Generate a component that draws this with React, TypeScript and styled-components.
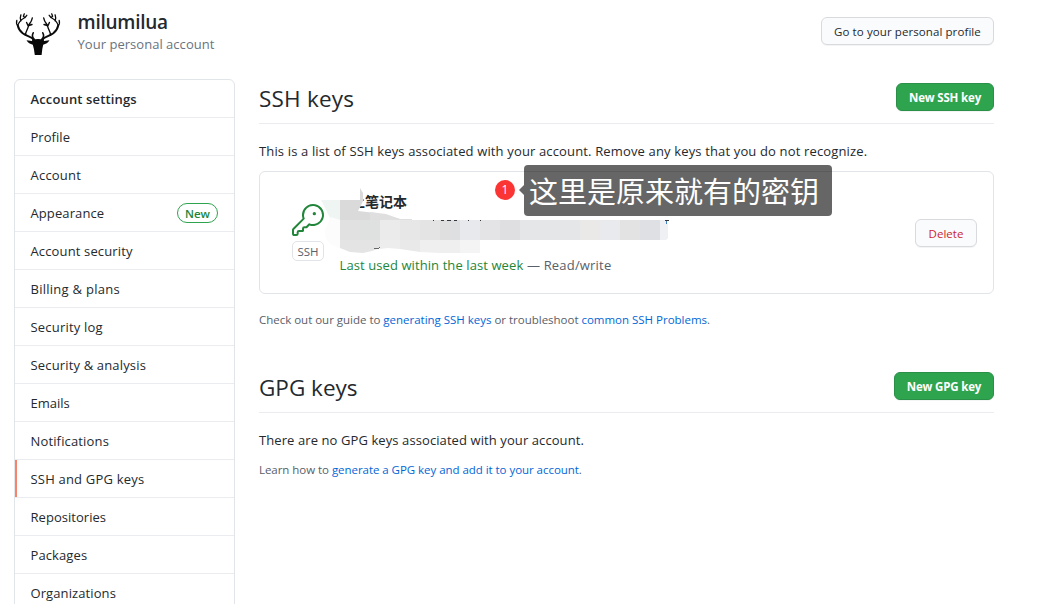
import React from "react";
import styled, { createGlobalStyle } from "styled-components";

const GlobalStyle = createGlobalStyle`
  * { box-sizing: border-box; }
  body {
    margin: 0;
    height: 604px;
    overflow: hidden;
    background: #fff;
    color: #24292e;
    font-family: "Open Sans", "Noto Sans CJK SC", sans-serif;
    font-size: 13px;
    line-height: 21px;
  }
  h1, h2, p { margin: 0; }
`;

const Page = styled.div`
  width: 994px;
  padding-left: 14px;
`;

const Header = styled.header`
  display: flex;
  align-items: flex-start;
  height: 79px;
  padding-top: 8px;
`;

const Identity = styled.div`
  flex: 1;
  padding: 2px 0 0 15.5px;
`;

const UserName = styled.h1`
  font-size: 19px;
  font-weight: 600;
  line-height: 25px;
`;

const Spaced = styled.span<{ $ls: number }>`
  letter-spacing: ${(p) => p.$ls}px;
`;

const UserNote = styled.p`
  color: #6a737d;
  line-height: 18px;
`;

const Button = styled.button<{ $width: number; $kind?: "primary" | "danger" }>`
  width: ${(p) => p.$width}px;
  height: 28px;
  flex: none;
  padding: 1px 0 0;
  border: 1px solid ${(p) => (p.$kind === "primary" ? "#2a8f47" : "#d8dade")};
  border-radius: 6px;
  background: ${(p) => (p.$kind === "primary" ? "#2ea44f" : "#fafbfc")};
  color: ${(p) => (p.$kind === "primary" ? "#fff" : p.$kind === "danger" ? "#cb2431" : "#24292e")};
  box-shadow: 0 1px 0 rgba(27, 31, 35, 0.05);
  font-family: inherit;
  font-size: 11.5px;
  font-weight: ${(p) => (p.$kind === "primary" ? 700 : 500)};
  line-height: 20px;
  white-space: nowrap;
`;

const ProfileAction = styled.div`
  padding-top: 9px;
`;

const Columns = styled.div`
  display: flex;
  gap: 24px;
`;

const Menu = styled.nav`
  width: 221px;
  flex: none;
  border: 1px solid #e1e4e8;
  border-radius: 6px;
`;

const MenuItem = styled.div<{ $heading?: boolean; $current?: boolean }>`
  display: flex;
  align-items: center;
  justify-content: space-between;
  height: 38px;
  padding: 1px 16px 0 15.5px;
  border-bottom: 1px solid #eaecef;
  font-weight: ${(p) => (p.$heading ? 600 : 400)};
  box-shadow: ${(p) => (p.$current ? "inset 2px 0 0 #f9826c" : "none")};
`;

const MenuText = styled(Spaced)`
  padding-top: 1px;
`;

const NewLabel = styled.span`
  width: 41px;
  height: 20px;
  margin-top: -1px;
  border: 1px solid #2ea44f;
  border-radius: 10px;
  color: #22863a;
  font-size: 11.5px;
  font-weight: 600;
  line-height: 19px;
  text-align: center;
`;

const Main = styled.main`
  width: 735px;
`;

const SectionHead = styled.div`
  display: flex;
  justify-content: space-between;
  height: 45px;
  padding-top: 4px;
  border-bottom: 1px solid #eaecef;
`;

const SectionTitle = styled.h2`
  font-size: 22.5px;
  font-weight: 400;
  line-height: 31px;
`;

const Paragraph = styled.p`
  padding-top: 17px;
  white-space: nowrap;
`;

const SmallNote = styled.p<{ $top: number }>`
  padding-top: ${(p) => p.$top}px;
  color: #586069;
  font-size: 11.5px;
  line-height: 18px;
  white-space: nowrap;
`;

const Link = styled.a`
  color: #0366d6;
`;

const KeyCard = styled.section`
  position: relative;
  display: flex;
  height: 123px;
  margin-top: 9px;
  padding: 20px 16px 0 32px;
  border: 1px solid #e1e4e8;
  border-radius: 6px;
`;

const KeyKind = styled.div`
  display: flex;
  flex-direction: column;
  align-items: center;
  width: 32px;
  padding-top: 12px;
`;

const KindLabel = styled.span`
  width: 32px;
  height: 20px;
  margin-top: 5px;
  border: 1px solid #e1e4e8;
  border-radius: 5px;
  color: #586069;
  font-size: 11.5px;
  line-height: 19px;
  text-align: center;
`;

const KeyInfo = styled.div`
  flex: 1;
  display: flex;
  flex-direction: column;
  justify-content: space-between;
  height: 84px;
  padding-left: 13px;
`;

const KeyName = styled.strong`
  font-size: 14px;
  font-weight: 700;
  line-height: 20px;
`;

const KeyUsage = styled.p`
  padding-left: 2.5px;
  color: #586069;
  white-space: nowrap;
`;

const Recent = styled.span`
  color: #22863a;
  letter-spacing: 0.09px;
`;

const DeleteSlot = styled.div`
  padding-top: 27px;
`;

const Redaction = styled.svg`
  position: absolute;
  left: 60px;
  top: 14px;
`;

const Callout = styled.div`
  position: absolute;
  left: 235px;
  top: -7px;
  display: flex;
  align-items: center;
`;

const CalloutNumber = styled.span`
  width: 20px;
  height: 20px;
  margin-bottom: 1px;
  border-radius: 50%;
  background: #fb3434;
  color: #fff;
  font-size: 12px;
  line-height: 20px;
  text-align: center;
`;

const CalloutArrow = styled.span`
  margin: 0 0 1px 4px;
  border: 5px solid transparent;
  border-left: 0;
  border-right-color: rgba(0, 0, 0, 0.6);
`;

const CalloutText = styled.span`
  width: 308px;
  height: 51px;
  padding-left: 5px;
  border-radius: 4px;
  background: rgba(0, 0, 0, 0.6);
  color: #fff;
  font-family: "Noto Sans CJK SC", sans-serif;
  font-size: 29px;
  line-height: 51px;
  white-space: nowrap;
`;

const SecondSection = styled.section`
  padding-top: 39px;
`;

const Antler = () => (
  <g fill="none" stroke="#0b0b0b" strokeLinecap="round" strokeLinejoin="round">
    <path strokeWidth="1.9" d="M19.5 31.5C17 28.5 12.5 28.3 8.7 25.3C6 23 4.3 20.8 3.8 17.5" />
    <path strokeWidth="1.3" d="M3.8 18C4.2 15 6.5 12 11 9.5L12.8 7.3M11 9.5L9.4 8.2L10.3 5.8M3.8 18C2.4 16.5 2.3 14.5 2.8 12.5M6.8 13C6 11.3 6 9.5 6.9 6.8" />
    <path strokeWidth="1.4" d="M11.5 27C11.5 23.5 13.800 21.8 14.4 18C14.8 15.8 17.5 14.5 18.3 10M14.4 18.5L12.6 14.5M14.8 17.5L18 16.5" />
    <path strokeWidth="1.6" d="M20 31C18 29 18 27 19.2 24.8" />
  </g>
);

const DeerAvatar = () => (
  <svg width="48" height="48" viewBox="0 0 48 48">
    <Antler />
    <g transform="translate(48 0) scale(-1 1)">
      <Antler />
    </g>
    <path
      fill="#080808"
      d="M18.5 29.8L21 31.3L24 31L27 31.3L29.5 29.8L30 33L35.5 32.3C34 34.8 31.8 36.2 29.2 36.7L28.3 41L27.6 47H20.800L19.9 41L18.8 36.7C16.2 36.2 14 34.8 12.5 32.3L18 33Z"
    />
  </svg>
);

const KeyIcon = () => (
  <svg width="32" height="32" viewBox="0 0 24 24" fill="#22863a" fillRule="evenodd">
    <path d="M16.75 8.5a1.25 1.25 0 100-2.5 1.25 1.25 0 000 2.5z" />
    <path d="M15.75 0a8.25 8.25 0 00-7.851 10.79L.513 18.178A1.75 1.75 0 000 19.414v2.836C0 23.217.784 24 1.75 24h1.5A1.75 1.75 0 005 22.25v-1a.25.25 0 01.25-.25h2.735a.75.75 0 00.53-.22l.214-.213A.875.875 0 009 19.948V18.5a.25.25 0 01.25-.25h1.086c.464 0 .91-.184 1.237-.513l1.636-1.636A8.25 8.25 0 1015.75 0zM9 8.25a6.75 6.75 0 114.288 6.287.75.75 0 00-.804.168l-1.971 1.972a.25.25 0 01-.177.073H9.25A1.75 1.75 0 007.5 18.5v1H5.25a1.75 1.75 0 00-1.75 1.75v1a.25.25 0 01-.25.25h-1.5a.25.25 0 01-.25-.25v-2.836a.25.25 0 01.073-.177l7.722-7.721a.75.75 0 00.168-.804A6.73 6.73 0 019 8.25z" />
  </svg>
);

const bandColors = [
  "#e1e1e2", "#dfe1e1", "#ebebec", "#e7e7e7", "#e4e4e5", "#dfdfe0", "#dedfe0", "#e7e9ec",
  "#e4e4e7", "#dfdfe1", "#e4e6e8", "#e4e6e7", "#e4e6e8", "#ebe9e7", "#e9eaed", "#e3e3e3",
];
const bandStarts = [340, 360, 380, 400, 420, 440, 450, 460, 480, 500, 520, 540, 560, 580, 600, 620];

const RedactedLines = () => (
  <Redaction width="352" height="70" viewBox="320 186 352 70">
    <path fill="#fff" d="M350 192H362L363 201L358 211H350Z" />
    <path fill="#eff5f2" d="M321 200H340V220H331Z" />
    <path fill="#fcfcfc" d="M331 217L340 220V248C330 246 324 240 325 230Z" />
    <path fill="#dadada" d="M340 200H360V188L363 193V201L358 211L376 213L389 216L400 219V220H340Z" />
    <path fill="#dfdfdf" d="M370 212L386 214L400 219H412V220H370Z" />
    {bandStarts.map((x, i) => (
      <rect key={x} x={x} y="220" width={(bandStarts[i + 1] ?? 640) - x} height="20" fill={bandColors[i]} />
    ))}
    <rect x="640" y="220" width="20" height="20" fill="#dfe0e3" />
    <path fill="#eff0f3" d="M660 220H665L668 224V238L666 240H660Z" />
    <path fill="#e4e4e5" d="M340 240H380V248L372 251L363 253L350 252L340 248Z" />
    <path fill="#ededed" d="M380 240H400V249L388 248L380 249Z" />
    <path fill="#e9e9e9" d="M400 240H420V252L400 249Z" />
    <path fill="#efefef" d="M420 240H460V253L440 253L420 252Z" />
    <path fill="#f4f4f4" d="M460 240H480V253H460Z" />
    <g fill="#34383d">
      <rect x="433" y="220" width="1" height="1" />
      <rect x="441" y="220" width="3" height="1" />
      <rect x="447" y="220" width="4" height="1" />
      <rect x="454" y="220" width="3" height="1" />
      <rect x="468" y="220" width="1" height="1" />
      <rect x="480" y="220" width="1" height="1" />
      <rect x="665" y="220" width="4" height="1" />
      <rect x="666" y="221" width="1" height="3" fill="#3f82c4" />
      <rect x="374" y="248" width="5" height="1" fill="#666" />
      <rect x="379" y="247" width="1" height="1" fill="#666" />
    </g>
  </Redaction>
);

type Entry = { label: string; ls: number; heading?: boolean; current?: boolean; badge?: string };

const entries: Entry[] = [
  { label: "Account settings", ls: 0.14, heading: true },
  { label: "Profile", ls: 0.05 },
  { label: "Account", ls: 0.22 },
  { label: "Appearance", ls: 0.1, badge: "New" },
  { label: "Account security", ls: 0.14 },
  { label: "Billing & plans", ls: 0.27 },
  { label: "Security log", ls: 0.2 },
  { label: "Security & analysis", ls: 0.16 },
  { label: "Emails", ls: 0 },
  { label: "Notifications", ls: 0.15 },
  { label: "SSH and GPG keys", ls: 0.2, current: true },
  { label: "Repositories", ls: 0.04 },
  { label: "Packages", ls: 0.1 },
  { label: "Organizations", ls: 0.1 },
];

export default function App() {
  return (
    <Page>
      <GlobalStyle />
      <Header>
        <DeerAvatar />
        <Identity>
          <UserName><Spaced $ls={-0.25}>milumilua</Spaced></UserName>
          <UserNote><Spaced $ls={0.03}>Your personal account</Spaced></UserNote>
        </Identity>
        <ProfileAction>
          <Button $width={173}><Spaced $ls={0.09}>Go to your personal profile</Spaced></Button>
        </ProfileAction>
      </Header>
      <Columns>
        <Menu>
          {entries.map((e) => (
            <MenuItem key={e.label} $heading={e.heading} $current={e.current}>
              <MenuText $ls={e.ls}>{e.label}</MenuText>
              {e.badge && <NewLabel>{e.badge}</NewLabel>}
            </MenuItem>
          ))}
        </Menu>
        <Main>
          <SectionHead>
            <SectionTitle><Spaced $ls={0.2}>SSH keys</Spaced></SectionTitle>
            <Button $width={98} $kind="primary"><Spaced $ls={-0.17}>New SSH key</Spaced></Button>
          </SectionHead>
          <Paragraph>
            <Spaced $ls={0.146}>
              This is a list of SSH keys associated with your account. Remove any keys that you do not recognize.
            </Spaced>
          </Paragraph>
          <KeyCard>
            <KeyKind>
              <KeyIcon />
              <KindLabel>SSH</KindLabel>
            </KeyKind>
            <KeyInfo>
              <KeyName>&#8195;上笔记本</KeyName>
              <KeyUsage>
                <Spaced $ls={0.19}>
                  <Recent>Last used within the last week</Recent> — Read/write
                </Spaced>
              </KeyUsage>
            </KeyInfo>
            <DeleteSlot>
              <Button $width={62} $kind="danger"><Spaced $ls={0.05}>Delete</Spaced></Button>
            </DeleteSlot>
            <RedactedLines />
            <Callout>
              <CalloutNumber>1</CalloutNumber>
              <CalloutArrow />
              <CalloutText>这里是原来就有的密钥</CalloutText>
            </Callout>
          </KeyCard>
          <SmallNote $top={17}>
            <Spaced $ls={-0.015}>
              Check out our guide to <Link>generating SSH keys</Link> or troubleshoot <Link>common SSH Problems</Link>.
            </Spaced>
          </SmallNote>
          <SecondSection>
            <SectionHead>
              <SectionTitle><Spaced $ls={0}>GPG keys</Spaced></SectionTitle>
              <Button $width={100} $kind="primary"><Spaced $ls={-0.17}>New GPG key</Spaced></Button>
            </SectionHead>
            <Paragraph><Spaced $ls={0.09}>There are no GPG keys associated with your account.</Spaced></Paragraph>
            <SmallNote $top={10}>
              <Spaced $ls={-0.045}>
                Learn how to <Link>generate a GPG key and add it to your account</Link>.
              </Spaced>
            </SmallNote>
          </SecondSection>
        </Main>
      </Columns>
    </Page>
  );
}
